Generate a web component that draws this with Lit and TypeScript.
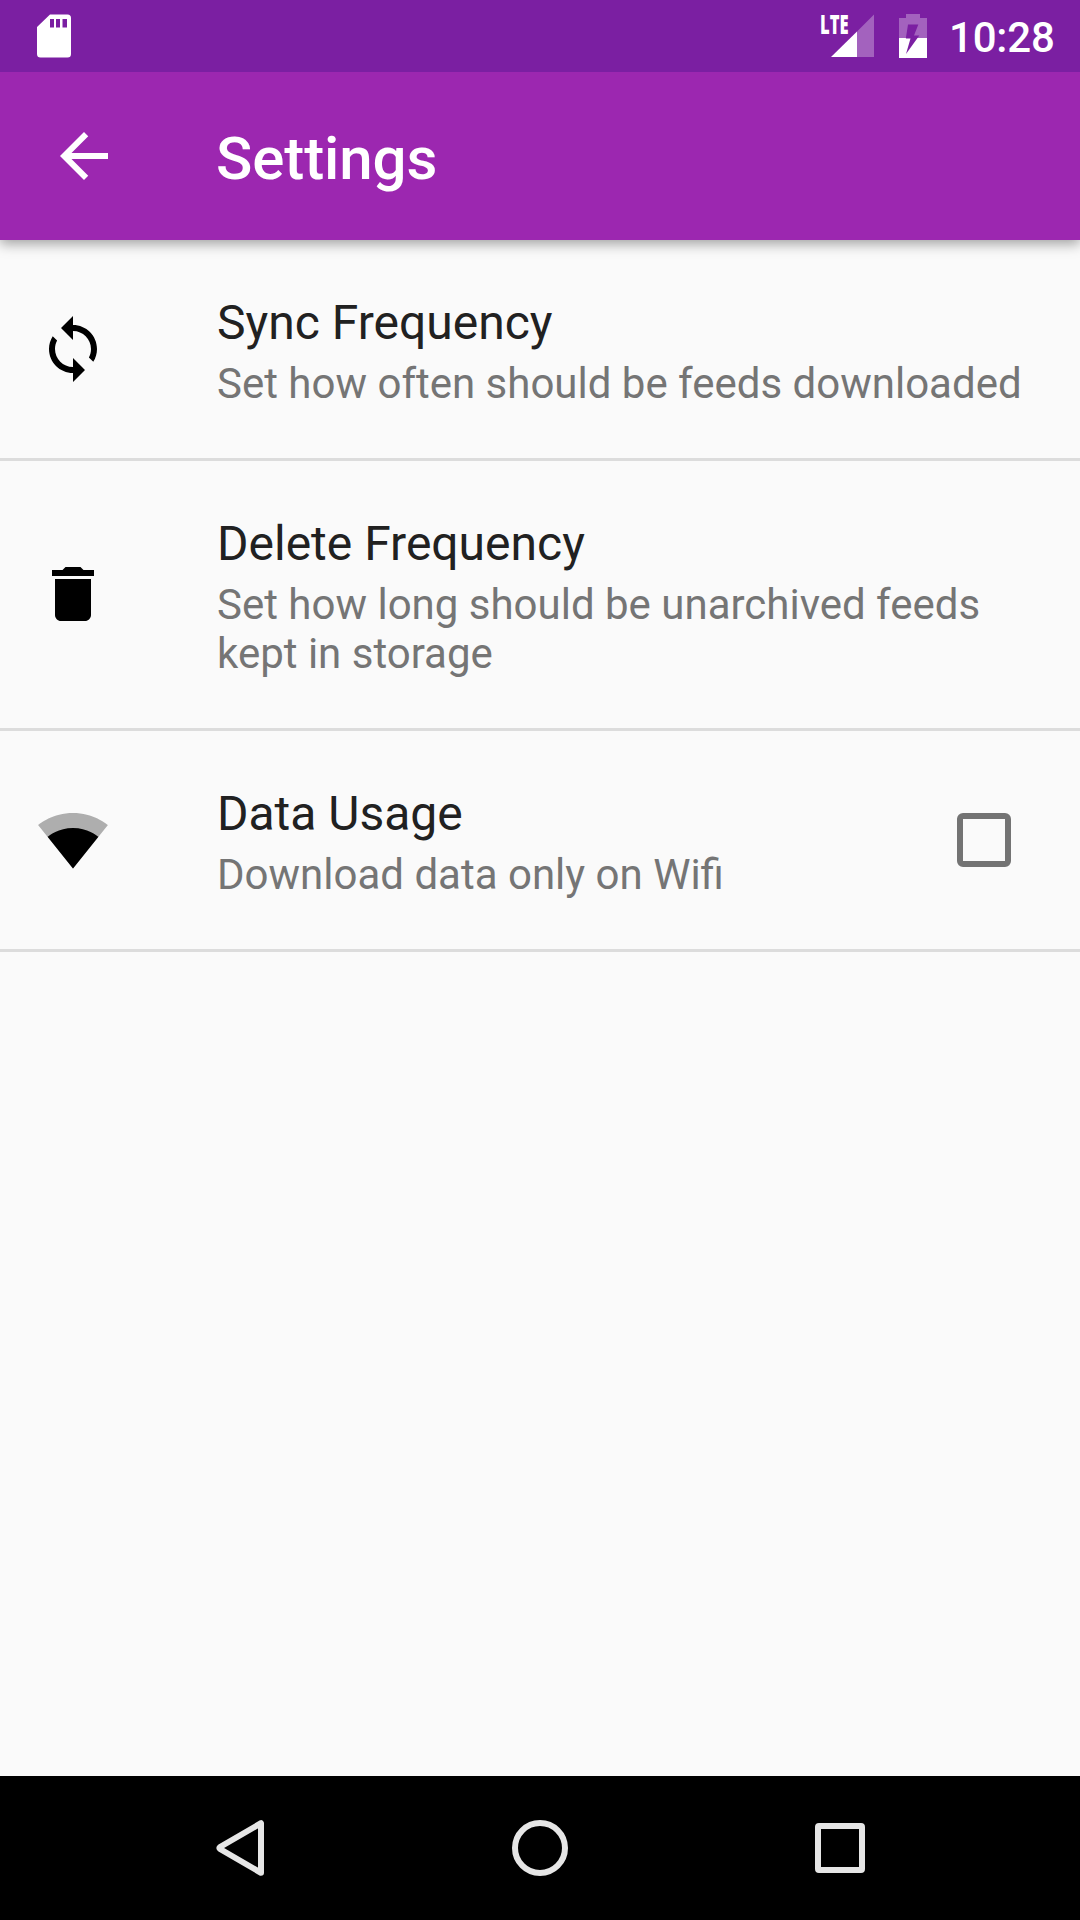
import { LitElement, html, css, svg } from "lit";
import { customElement, property } from "lit/decorators.js";

const ICONS: Record<string, unknown> = {
  sync: svg`<path d="M12 4V1L8 5l4 4V6c3.31 0 6 2.69 6 6 0 1.010-.25 1.970-.7 2.800l1.460 1.460C19.540 15.030 20 13.570 20 12c0-4.420-3.580-8-8-8zm0 14c-3.310 0-6-2.690-6-6 0-1.010.25-1.970.7-2.800L5.240 7.740C4.460 8.970 4 10.430 4 12c0 4.420 3.580 8 8 8v3l4-4-4-4v3z"/>`,
  trash: svg`<path d="M6 19c0 1.1.9 2 2 2h8c1.1 0 2-.9 2-2V7H6v12zM19 4h-3.500l-1-1h-5l-1 1H5v2h14V4z"/>`,
  wifi: svg`<path fill-opacity=".3" d="M12.010 21.490L23.640 7c-.45-.34-4.930-4-11.640-4C5.280 3 .81 6.660.36 7l11.630 14.490.01.01.01-.01z"/><path d="M3.530 10.950l8.460 10.540.01.01.01-.01 8.460-10.540C20.040 10.620 16.810 8 12 8c-4.810 0-8.040 2.620-8.470 2.950z"/>`,
  back: svg`<path d="M20 11H7.830l5.590-5.590L12 4l-8 8 8 8 1.410-1.410L7.830 13H20v-2z"/>`,
};

@customElement("status-bar")
class StatusBar extends LitElement {
  static styles = css`
    :host { display: flex; align-items: center; height: 72px; background: #7b1fa2; color: #fff; padding: 0 25px 0 36px; }
    svg { display: block; }
    .spacer { flex: 1; }
    .net { margin-right: 24px; }
    .battery { margin-right: 21px; }
    .lte { font: 800 26.5px "Open Sans", sans-serif; }
    .time { font: 500 42px/72px Roboto, sans-serif; letter-spacing: -.2px; width: 106px; padding-top: 3px; white-space: nowrap; }
  `;
  render() {
    return html`
      <svg width="36" height="72" viewBox="0 0 36 72" fill="#fff">
        <path fill-rule="evenodd" d="M14 14.500H31.500a3.500 3.500 0 0 1 3.500 3.500V54a3.500 3.500 0 0 1-3.500 3.500H4.500a3.500 3.500 0 0 1-3.500-3.500V27zM14 19v8.500h4V19zM20 19v8.500h4V19zM26.500 19v8.500h4.500V19z"/>
      </svg>
      <span class="spacer"></span>
      <svg class="net" width="54" height="72" viewBox="820 0 54 72" fill="#fff">
        <path fill-opacity=".3" d="M874 14.500V57H857V31.500z"/>
        <path d="M831 57L857 31.500V57z"/>
        <text class="lte" x="820" y="33.700" textLength="28.500" lengthAdjust="spacingAndGlyphs">LTE</text>
      </svg>
      <svg class="battery" width="30" height="72" viewBox="898 0 30 72" fill="#fff">
        <path fill-opacity=".3" d="M906 14h14v4h7V38H917.500L919.300 35.500H914L918.300 24.500H908L905.900 38H899V18h7z"/>
        <path d="M899 38H905.900V38.500H910.500L906 54L917.500 38H927V58H899z"/>
      </svg>
      <span class="time">10:28</span>
    `;
  }
}

@customElement("tool-bar")
class ToolBar extends LitElement {
  static styles = css`
    :host { display: flex; align-items: center; height: 168px; background: #9c27b0; color: #fff; padding-left: 48px; }
    .icon { width: 72px; height: 72px; margin-right: 96px; }
    .title { font: 500 60px/72px Roboto, sans-serif; letter-spacing: -.1px; padding-top: 5px; }
  `;
  render() {
    return html`
      <svg class="icon" viewBox="0 0 24 24" fill="#fff">${ICONS.back}</svg>
      <span class="title">Settings</span>
    `;
  }
}

@customElement("setting-row")
class SettingRow extends LitElement {
  @property() icon = "";
  @property() heading = "";
  @property() summary = "";
  @property({ type: Boolean }) checkable = false;
  static styles = css`
    :host { display: flex; align-items: center; border-bottom: 3px solid #dcdcdc; padding: 54px 48px 50px 37px; font-family: Roboto, sans-serif; }
    .icon { width: 72px; height: 72px; margin: -5px 107px 0 0; flex: none; }
    .texts { flex: 1; padding-left: 1px; }
    .heading { font-size: 48px; line-height: 57px; color: #212121; }
    .summary { font-size: 42px; line-height: 49px; color: #757575; padding-top: 8px; }
    .box { box-sizing: border-box; width: 54px; height: 54px; border: 6px solid #737373; border-radius: 6px; margin: -4px 21px 0 0; }
  `;
  render() {
    return html`
      <svg class="icon" viewBox="0 0 24 24">${ICONS[this.icon]}</svg>
      <div class="texts">
        <div class="heading">${this.heading}</div>
        <div class="summary">${this.summary}</div>
      </div>
      ${this.checkable ? html`<div class="box" role="checkbox" aria-checked="false"></div>` : null}
    `;
  }
}

@customElement("nav-bar")
class NavBar extends LitElement {
  static styles = css`
    :host { display: flex; align-items: center; justify-content: center; gap: 156px; height: 144px; background: #000; }
    svg { width: 144px; height: 144px; }
  `;
  render() {
    return html`
      <svg viewBox="168 1776 144 144" fill="none" stroke="#e6e6e6" stroke-width="6" stroke-linejoin="round"><path d="M261 1823.200V1872.800L220 1849Q219 1848 220 1847z"/></svg>
      <svg viewBox="468 1776 144 144" fill="none" stroke="#e6e6e6" stroke-width="6"><circle cx="540" cy="1848" r="25"/></svg>
      <svg viewBox="768 1776 144 144" fill="none" stroke="#e6e6e6" stroke-width="6"><rect x="818" y="1826" width="44" height="44" rx="1"/></svg>
    `;
  }
}

@customElement("app-root")
class AppRoot extends LitElement {
  static styles = css`
    :host { display: flex; flex-direction: column; height: 1920px; width: 1080px; background: #fafafa; overflow: hidden; }
    .list { flex: 1; }
    .header { box-shadow: 0 4px 12px rgba(0, 0, 0, .36); }
  `;
  render() {
    return html`
      <div class="header">
        <status-bar></status-bar>
        <tool-bar></tool-bar>
      </div>
      <div class="list">
        <setting-row icon="sync" heading="Sync Frequency" summary="Set how often should be feeds downloaded"></setting-row>
        <setting-row icon="trash" heading="Delete Frequency" summary="Set how long should be unarchived feeds kept in storage"></setting-row>
        <setting-row icon="wifi" heading="Data Usage" summary="Download data only on Wifi" checkable></setting-row>
      </div>
      <nav-bar></nav-bar>
    `;
  }
}
